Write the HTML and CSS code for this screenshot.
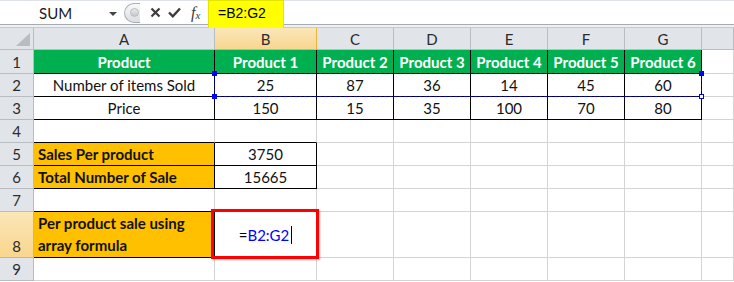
FILE: index.html
```html
<!DOCTYPE html>
<html lang="en">
<head>
    <meta charset="UTF-8">
    <title>Array formula - Excel</title>
    <link rel="stylesheet" href="styles.css">
</head>
<body>
    <div class="formula-bar">
        <div class="name-box">
            <span class="name">SUM</span>
            <span class="dropdown"></span>
        </div>
        <div class="bar-tools">
            <span class="grip"><span class="grip-dot"></span></span>
            <svg class="icon-cancel" width="11" height="11" viewBox="0 0 11 11">
                <path d="M1.5 1.5 L9.5 9.5 M9.5 1.5 L1.5 9.5" stroke="#3c3c3c" stroke-width="2.2" fill="none"/>
            </svg>
            <svg class="icon-enter" width="13" height="11" viewBox="0 0 13 11">
                <path d="M1 5.5 L4.8 9.3 L12 1.5" stroke="#3c3c3c" stroke-width="2.4" fill="none"/>
            </svg>
            <span class="icon-fx">f<span class="fx-x">x</span></span>
        </div>
        <div class="formula-input">
            <div class="formula-mark">=B2:G2</div>
        </div>
    </div>
    <div class="bar-gap"></div>

    <div class="sheet">
        <div class="grid">
            <!-- column headers -->
            <div class="cell corner"><span class="corner-tri"></span></div>
            <div class="cell ch">A</div>
            <div class="cell ch ch-active">B</div>
            <div class="cell ch">C</div>
            <div class="cell ch">D</div>
            <div class="cell ch">E</div>
            <div class="cell ch">F</div>
            <div class="cell ch">G</div>
            <div class="cell ch"></div>

            <!-- row 1 -->
            <div class="cell rh">1</div>
            <div class="cell green boxed">Product</div>
            <div class="cell green boxed">Product 1</div>
            <div class="cell green boxed">Product 2</div>
            <div class="cell green boxed">Product 3</div>
            <div class="cell green boxed">Product 4</div>
            <div class="cell green boxed">Product 5</div>
            <div class="cell green boxed">Product 6</div>
            <div class="cell"></div>

            <!-- row 2 -->
            <div class="cell rh">2</div>
            <div class="cell boxed">Number of items Sold</div>
            <div class="cell boxed">25</div>
            <div class="cell boxed">87</div>
            <div class="cell boxed">36</div>
            <div class="cell boxed">14</div>
            <div class="cell boxed">45</div>
            <div class="cell boxed">60</div>
            <div class="cell"></div>

            <!-- row 3 -->
            <div class="cell rh">3</div>
            <div class="cell boxed">Price</div>
            <div class="cell boxed">150</div>
            <div class="cell boxed">15</div>
            <div class="cell boxed">35</div>
            <div class="cell boxed">100</div>
            <div class="cell boxed">70</div>
            <div class="cell boxed">80</div>
            <div class="cell"></div>

            <!-- row 4 -->
            <div class="cell rh">4</div>
            <div class="cell edge-b"></div>
            <div class="cell edge-b"></div>
            <div class="cell"></div>
            <div class="cell"></div>
            <div class="cell"></div>
            <div class="cell"></div>
            <div class="cell"></div>
            <div class="cell"></div>

            <!-- row 5 -->
            <div class="cell rh">5</div>
            <div class="cell orange boxed label">Sales Per product</div>
            <div class="cell boxed">3750</div>
            <div class="cell"></div>
            <div class="cell"></div>
            <div class="cell"></div>
            <div class="cell"></div>
            <div class="cell"></div>
            <div class="cell"></div>

            <!-- row 6 -->
            <div class="cell rh">6</div>
            <div class="cell orange boxed label">Total Number of Sale</div>
            <div class="cell boxed">15665</div>
            <div class="cell"></div>
            <div class="cell"></div>
            <div class="cell"></div>
            <div class="cell"></div>
            <div class="cell"></div>
            <div class="cell"></div>

            <!-- row 7 -->
            <div class="cell rh">7</div>
            <div class="cell edge-b"></div>
            <div class="cell edge-b"></div>
            <div class="cell"></div>
            <div class="cell"></div>
            <div class="cell"></div>
            <div class="cell"></div>
            <div class="cell"></div>
            <div class="cell"></div>

            <!-- row 8 -->
            <div class="cell rh rh-active rh-tall">8</div>
            <div class="cell orange boxed label wrap">Per product sale using array formula</div>
            <div class="cell boxed editing"><span class="eq">=</span><span class="ref">B2:G2</span><span class="caret"></span></div>
            <div class="cell"></div>
            <div class="cell"></div>
            <div class="cell"></div>
            <div class="cell"></div>
            <div class="cell"></div>
            <div class="cell"></div>

            <!-- row 9 -->
            <div class="cell rh">9</div>
            <div class="cell"></div>
            <div class="cell"></div>
            <div class="cell"></div>
            <div class="cell"></div>
            <div class="cell"></div>
            <div class="cell"></div>
            <div class="cell"></div>
            <div class="cell"></div>
        </div>

        <!-- range referenced by the formula (B2:G2) -->
        <div class="ref-range">
            <span class="handle h-tl"></span>
            <span class="handle h-tr"></span>
            <span class="handle h-bl"></span>
            <span class="handle h-br"></span>
        </div>
        <!-- highlight around the cell being edited -->
        <div class="edit-box"></div>
    </div>
</body>
</html>
```

FILE: styles.css
```css
* {
    margin: 0;
    padding: 0;
    box-sizing: border-box;
}

body {
    width: 734px;
    height: 282px;
    overflow: hidden;
    background: white;
    font-family: 'Lato', 'Liberation Sans', sans-serif;
    font-size: 15px;
    color: #111;
}

/* formula bar */
.formula-bar {
    position: relative;
    display: flex;
    height: 25px;
    border-top: 1px solid #dfe2e6;
    border-bottom: 1px solid #a5abb3;
    background: white;
}

.name-box {
    width: 122px;
    display: flex;
    align-items: center;
    padding-left: 39px;
    padding-right: 5px;
}

.name {
    font-size: 15px;
    color: #1a1a1a;
}

.dropdown {
    margin-left: auto;
    margin-top: 2px;
    border-left: 4px solid transparent;
    border-right: 4px solid transparent;
    border-top: 4px solid #444;
}

.bar-tools {
    width: 85px;
    display: flex;
    align-items: center;
    padding-left: 2px;
}

.grip {
    flex-shrink: 0;
    width: 16px;
    height: 20px;
    border: 1px solid #a9aeb5;
    border-right: none;
    border-radius: 10px 0 0 10px;
    background: linear-gradient(#fafafa, #dadde1);
    display: flex;
    align-items: center;
    justify-content: flex-end;
    padding-right: 1px;
}

.grip-dot {
    width: 9px;
    height: 9px;
    border-radius: 50%;
    border: 1px solid #b9bcc1;
    background: linear-gradient(#e9eaec, #c4c7cb);
}

.icon-cancel {
    flex-shrink: 0;
    margin-left: 10px;
}

.icon-enter {
    flex-shrink: 0;
    margin-left: 7px;
}

.icon-fx {
    margin-left: 10px;
    font-family: 'Liberation Serif', serif;
    font-style: italic;
    font-size: 16px;
    color: #3c3c3c;
    line-height: 1;
}

.fx-x {
    font-size: 11px;
    vertical-align: -1px;
}

.formula-input {
    flex: 1;
    position: relative;
}

.formula-mark {
    position: absolute;
    left: 1px;
    top: -1px;
    width: 76px;
    height: 29px;
    background: #ffff00;
    border: 1px solid #e4e400;
    padding: 4px 0 0 9px;
    font-family: 'Liberation Sans', sans-serif;
    font-size: 14px;
    color: #000;
}

.bar-gap {
    height: 3px;
    background: #eef0f2;
    border-bottom: 1px solid #c6cad0;
}

/* sheet */
.sheet {
    position: relative;
}

.grid {
    display: grid;
    grid-template-columns: 34px 181px 102px 77px 77px 77px 77px 77px 32px;
    grid-template-rows: 22px 24px 23px 23px 23px 23px 23px 23px 46px 23px;
}

.cell {
    display: flex;
    align-items: center;
    justify-content: center;
    border-right: 1px solid #d4d4d4;
    border-bottom: 1px solid #d4d4d4;
    white-space: nowrap;
    overflow: hidden;
}

.ch,
.rh,
.corner {
    background: #e1e5ea;
    border-color: #b8bdc4;
    color: #2b2b2b;
}

.ch {
    padding-top: 1px;
}

.corner {
    justify-content: flex-end;
    align-items: flex-end;
    padding: 0 3px 3px 0;
}

.corner-tri {
    border-left: 14px solid transparent;
    border-bottom: 13px solid #b8bdc4;
}

.ch-active,
.rh-active {
    background: linear-gradient(#fbe6b8, #f8d68e);
    border-color: #f0b23c;
}

.rh-tall {
    align-items: flex-end;
    padding-bottom: 2px;
}

.green {
    background: #00b050;
    color: white;
    font-weight: bold;
}

.orange {
    background: #ffc000;
}

.boxed {
    border-color: #000;
}

.edge-b {
    border-bottom-color: #000;
}

.label {
    justify-content: flex-start;
    padding-left: 4px;
    font-weight: bold;
}

.wrap {
    white-space: normal;
    align-items: flex-end;
    line-height: 22px;
    padding-bottom: 1px;
    padding-right: 20px;
}

.editing {
    padding-top: 1px;
}

.eq {
    color: #000;
}

.ref {
    color: #0000ff;
}

.caret {
    width: 1px;
    height: 18px;
    margin-left: 2px;
    background: #000;
}

.ref-range {
    position: absolute;
    left: 214px;
    top: 45px;
    width: 488px;
    height: 24px;
    border: 1px dashed #0000cc;
}

.handle {
    position: absolute;
    width: 5px;
    height: 5px;
    background: #0000ff;
    border: 1px solid #0000ff;
}

.h-tl { left: -3px; top: -3px; }
.h-tr { right: -3px; top: -3px; }
.h-bl { left: -3px; bottom: -3px; }
.h-br { right: -3px; bottom: -3px; background: white; }

.edit-box {
    position: absolute;
    left: 211px;
    top: 181px;
    width: 108px;
    height: 50px;
    border: 3px solid #ff0000;
    box-shadow: 1px 1px 2px rgba(0, 0, 0, 0.25);
}
```
